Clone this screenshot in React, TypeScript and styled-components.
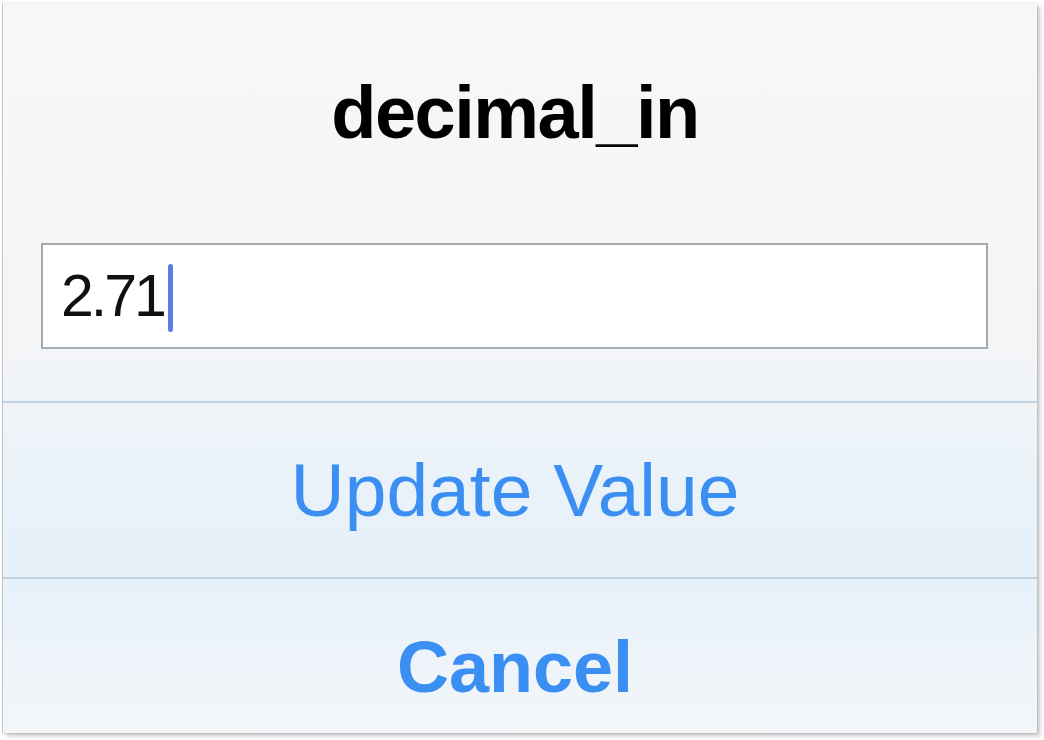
import React from "react";
import styled, { createGlobalStyle } from "styled-components";

const Global = createGlobalStyle`
  html, body { margin: 0; padding: 0; background: #ffffff; }
  body { font-family: "Liberation Sans", Arial, sans-serif; }
  * { box-sizing: border-box; }
`;

const Page = styled.div`
  width: 1044px;
  height: 740px;
  padding: 3px 0 0 3px;
`;

const Card = styled.div`
  width: 1034px;
  height: 730px;
  display: flex;
  flex-direction: column;
  background: linear-gradient(
    to bottom,
    #f7f7f7 0px,
    #f6f6f6 250px,
    #f1f4f7 390px,
    #ecf3f9 440px,
    #e5f0f9 570px,
    #e9f2fa 600px,
    #f3f6f9 730px
  );
  box-shadow: -1px 0 0 rgba(0, 0, 0, 0.18), 0 0 2px rgba(0, 0, 0, 0.18),
    3px 3px 4px rgba(0, 0, 0, 0.22);
`;

const Title = styled.h1`
  margin: 0;
  padding: 73px 10px 0 0;
  font-family: "Liberation Sans", Arial, sans-serif;
  font-weight: 700;
  font-size: 74px;
  line-height: 74px;
  letter-spacing: -1.5px;
  text-align: center;
  color: #000000;
`;

const FieldRow = styled.div`
  padding: 93px 49px 0 38px;
`;

const Field = styled.div`
  height: 106px;
  background: #ffffff;
  border: 2px solid #a9a9a9;
  border-bottom-color: #a3adb6;
  display: flex;
  align-items: center;
  padding-left: 18px;
`;

const FieldText = styled.span`
  font-family: "Liberation Sans", Arial, sans-serif;
  font-size: 59px;
  line-height: 60px;
  letter-spacing: -3px;
  color: #111111;
`;

const Caret = styled.span`
  display: inline-block;
  width: 5px;
  height: 68px;
  margin-left: 4px;
  margin-top: 4px;
  border-radius: 3px;
  background: #5a7ee6;
`;

const Spacer = styled.div`
  height: 52px;
`;

const Divider = styled.div`
  height: 2px;
  background: #bfd3e3;
`;

const Action = styled.div<{ $bold?: boolean; $height: number; $offset: number }>`
  height: ${(p) => p.$height}px;
  padding: ${(p) => p.$offset}px 10px 0 0;
  display: flex;
  align-items: center;
  justify-content: center;
  font-family: "Liberation Sans", Arial, sans-serif;
  font-size: ${(p) => (p.$bold ? 72 : 75)}px;
  font-weight: ${(p) => (p.$bold ? 700 : 400)};
  color: #3b8ef2;
  cursor: pointer;
`;

export default function App() {
  return (
    <Page>
      <Global />
      <Card>
        <Title>decimal_in</Title>
        <FieldRow>
          <Field>
            <FieldText>2.71</FieldText>
            <Caret />
          </Field>
        </FieldRow>
        <Spacer />
        <Divider />
        <Action $height={174} $offset={0}>Update Value</Action>
        <Divider />
        <Action $bold $height={152} $offset={24}>Cancel</Action>
      </Card>
    </Page>
  );
}
